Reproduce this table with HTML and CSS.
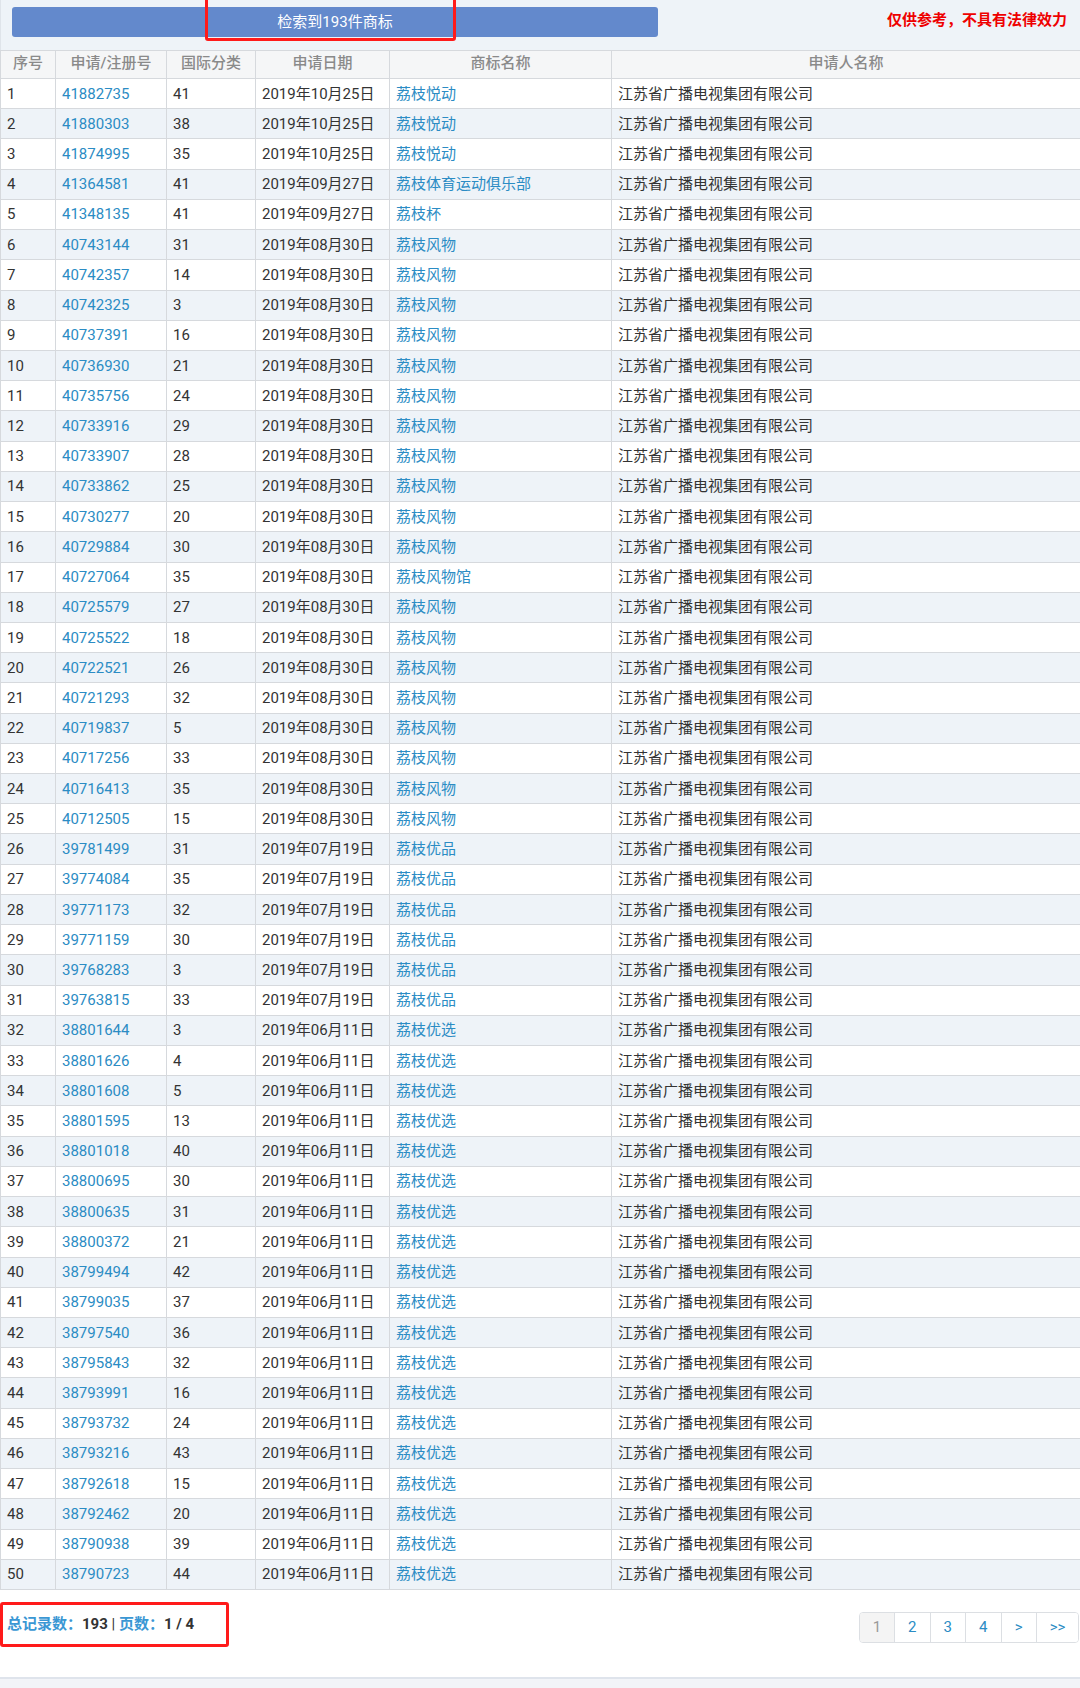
FILE: index.html
```html
<!DOCTYPE html>
<html lang="zh-CN">
<head>
<meta charset="utf-8">
<title>商标检索结果</title>
<link rel="stylesheet" href="styles.css">
</head>
<body>
<div class="page">
  <div class="topbar">
    <div class="result-btn">检索到193件商标</div>
    <div class="notice">仅供参考，不具有法律效力</div>
    <div class="mark mark-top"></div>
  </div>
  <table class="tm-table">
    <colgroup>
      <col class="c1"><col class="c2"><col class="c3"><col class="c4"><col class="c5"><col class="c6">
    </colgroup>
    <thead>
      <tr><th>序号</th><th>申请/注册号</th><th>国际分类</th><th>申请日期</th><th>商标名称</th><th>申请人名称</th></tr>
    </thead>
    <tbody id="rows"></tbody>
  </table>
  <div class="footer">
    <div class="summary"><span class="lbl">总记录数：</span><b>193</b> | <span class="lbl">页数：</span><b>1 / 4</b></div>
    <div class="pager">
      <span class="pg cur">1</span><span class="pg">2</span><span class="pg">3</span><span class="pg">4</span><span class="pg">&gt;</span><span class="pg last">&gt;&gt;</span>
    </div>
    <div class="mark mark-bottom"></div>
  </div>
  <div class="bottom-strip"></div>
</div>
<script src="app.js"></script>
</body>
</html>
```
FILE: app.js
```js
var data = [
["41882735","41","2019年10月25日","荔枝悦动"],
["41880303","38","2019年10月25日","荔枝悦动"],
["41874995","35","2019年10月25日","荔枝悦动"],
["41364581","41","2019年09月27日","荔枝体育运动俱乐部"],
["41348135","41","2019年09月27日","荔枝杯"],
["40743144","31","2019年08月30日","荔枝风物"],
["40742357","14","2019年08月30日","荔枝风物"],
["40742325","3","2019年08月30日","荔枝风物"],
["40737391","16","2019年08月30日","荔枝风物"],
["40736930","21","2019年08月30日","荔枝风物"],
["40735756","24","2019年08月30日","荔枝风物"],
["40733916","29","2019年08月30日","荔枝风物"],
["40733907","28","2019年08月30日","荔枝风物"],
["40733862","25","2019年08月30日","荔枝风物"],
["40730277","20","2019年08月30日","荔枝风物"],
["40729884","30","2019年08月30日","荔枝风物"],
["40727064","35","2019年08月30日","荔枝风物馆"],
["40725579","27","2019年08月30日","荔枝风物"],
["40725522","18","2019年08月30日","荔枝风物"],
["40722521","26","2019年08月30日","荔枝风物"],
["40721293","32","2019年08月30日","荔枝风物"],
["40719837","5","2019年08月30日","荔枝风物"],
["40717256","33","2019年08月30日","荔枝风物"],
["40716413","35","2019年08月30日","荔枝风物"],
["40712505","15","2019年08月30日","荔枝风物"],
["39781499","31","2019年07月19日","荔枝优品"],
["39774084","35","2019年07月19日","荔枝优品"],
["39771173","32","2019年07月19日","荔枝优品"],
["39771159","30","2019年07月19日","荔枝优品"],
["39768283","3","2019年07月19日","荔枝优品"],
["39763815","33","2019年07月19日","荔枝优品"],
["38801644","3","2019年06月11日","荔枝优选"],
["38801626","4","2019年06月11日","荔枝优选"],
["38801608","5","2019年06月11日","荔枝优选"],
["38801595","13","2019年06月11日","荔枝优选"],
["38801018","40","2019年06月11日","荔枝优选"],
["38800695","30","2019年06月11日","荔枝优选"],
["38800635","31","2019年06月11日","荔枝优选"],
["38800372","21","2019年06月11日","荔枝优选"],
["38799494","42","2019年06月11日","荔枝优选"],
["38799035","37","2019年06月11日","荔枝优选"],
["38797540","36","2019年06月11日","荔枝优选"],
["38795843","32","2019年06月11日","荔枝优选"],
["38793991","16","2019年06月11日","荔枝优选"],
["38793732","24","2019年06月11日","荔枝优选"],
["38793216","43","2019年06月11日","荔枝优选"],
["38792618","15","2019年06月11日","荔枝优选"],
["38792462","20","2019年06月11日","荔枝优选"],
["38790938","39","2019年06月11日","荔枝优选"],
["38790723","44","2019年06月11日","荔枝优选"]
];
var html = "";
for (var i = 0; i < data.length; i++) {
  var d = data[i];
  html += "<tr><td>" + (i + 1) + "</td><td><a class=\"lnk\">" + d[0] + "</a></td><td>" + d[1] +
    "</td><td>" + d[2] + "</td><td><a class=\"lnk\">" + d[3] + "</a></td><td>江苏省广播电视集团有限公司</td></tr>";
}
document.getElementById("rows").innerHTML = html;
```
FILE: styles.css
```css
* { box-sizing: border-box; }
html, body { margin: 0; padding: 0; background: #ffffff; }
body {
  font-family: Roboto, "Noto Sans CJK SC", sans-serif;
  font-size: 15px;
  color: #333333;
}
.page { position: relative; width: 1080px; }
.topbar {
  position: relative;
  height: 50px;
  background: #eef3f8;
  border-left: 1px solid #dfe4ea;
  display: flex;
  align-items: flex-start;
  justify-content: space-between;
  padding: 7px 13px 0 11px;
}
.result-btn {
  width: 646px;
  height: 30px;
  line-height: 30px;
  background: #6389cc;
  color: #ffffff;
  text-align: center;
  border-radius: 3px;
  font-size: 15px;
}
.notice {
  color: #ee0000;
  font-weight: bold;
  font-size: 15px;
  line-height: 26px;
}
.mark {
  position: absolute;
  border: 3px solid #ff1a1a;
  border-radius: 3px;
}
.mark-top { left: 204px; top: -4px; width: 251px; height: 45px; }
.tm-table {
  width: 1080px;
  border-collapse: collapse;
  table-layout: fixed;
}
.c1 { width: 55px; }
.c2 { width: 111px; }
.c3 { width: 89px; }
.c4 { width: 134px; }
.c5 { width: 222px; }
.c6 { width: 469px; }
.tm-table th, .tm-table td {
  border: 1px solid #d6d9dd;
  height: 30.22px;
  padding: 0 6px;
  white-space: nowrap;
  overflow: hidden;
  line-height: 20px;
}
.tm-table th {
  height: 28px;
  padding-bottom: 3px;
  background: #f5f6f7;
  color: #8a8a8a;
  font-weight: 500;
  text-align: center;
}
.tm-table td { text-align: left; }
.tm-table tbody tr:nth-child(even) td { background: #eef3f8; }
.lnk { color: #2b8cc4; text-decoration: none; }
.footer {
  position: relative;
  height: 87px;
  display: flex;
  justify-content: space-between;
  align-items: flex-start;
  padding: 22px 1px 0 7px;
}
.summary {
  font-size: 15px;
  line-height: 22px;
  margin-top: 1px;
  color: #333333;
}
.summary .lbl { color: #3a97d4; font-weight: bold; }
.summary b { color: #333333; }
.pager {
  display: flex;
  border: 1px solid #dcdfe3;
  border-radius: 4px;
  overflow: hidden;
  height: 31px;
}
.pg {
  width: 35.5px;
  line-height: 29px;
  text-align: center;
  color: #2b8cc4;
  font-size: 15px;
  border-left: 1px solid #dcdfe3;
  background: #ffffff;
}
.pg:first-child { border-left: none; width: 34px; }
.pg.cur { background: #f4f4f4; color: #999999; }
.pg.last { width: 42px; }
.mark-bottom { left: 0; top: 12px; width: 229px; height: 45px; }
.bottom-strip {
  height: 11px;
  border-top: 2px solid #dfe4ec;
  background: #f2f4f8;
}
```
